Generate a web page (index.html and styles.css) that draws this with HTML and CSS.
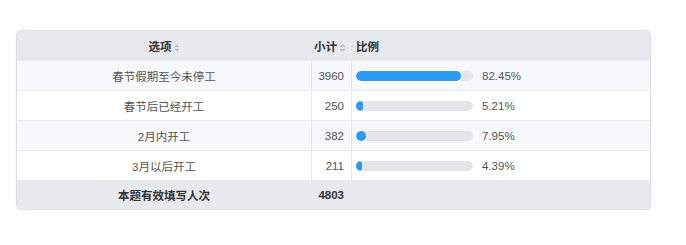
FILE: index.html
```html
<!DOCTYPE html>
<html lang="zh-CN">
<head>
<meta charset="utf-8">
<link rel="stylesheet" href="styles.css">
</head>
<body>
<div class="wrap">
  <table class="stat">
    <colgroup>
      <col class="col-opt">
      <col class="col-num">
      <col class="col-bar">
    </colgroup>
    <thead>
      <tr>
        <th class="c-opt">选项<span class="sort"></span></th>
        <th class="c-num">小计<span class="sort"></span></th>
        <th class="c-bar">比例</th>
      </tr>
    </thead>
    <tbody>
      <tr class="odd">
        <td class="c-opt">春节假期至今未停工</td>
        <td class="c-num">3960</td>
        <td class="c-bar"><div class="barline"><div class="track"><div class="fill" style="width:89.5%"></div></div><span class="pct">82.45%</span></div></td>
      </tr>
      <tr>
        <td class="c-opt">春节后已经开工</td>
        <td class="c-num">250</td>
        <td class="c-bar"><div class="barline"><div class="track"><div class="fill" style="width:6%"></div></div><span class="pct">5.21%</span></div></td>
      </tr>
      <tr class="odd">
        <td class="c-opt">2月内开工</td>
        <td class="c-num">382</td>
        <td class="c-bar"><div class="barline"><div class="track"><div class="fill" style="width:8.5%"></div></div><span class="pct">7.95%</span></div></td>
      </tr>
      <tr>
        <td class="c-opt">3月以后开工</td>
        <td class="c-num">211</td>
        <td class="c-bar"><div class="barline"><div class="track"><div class="fill" style="width:5.2%"></div></div><span class="pct">4.39%</span></div></td>
      </tr>
    </tbody>
    <tfoot>
      <tr>
        <td class="c-opt">本题有效填写人次</td>
        <td class="c-num">4803</td>
        <td class="c-bar"></td>
      </tr>
    </tfoot>
  </table>
</div>
</body>
</html>
```
FILE: styles.css
```css
html, body {
  margin: 0;
  padding: 0;
  background: #ffffff;
}
.wrap {
  padding: 30px 0 0 16px;
}
.stat {
  width: 635px;
  border-collapse: separate;
  border-spacing: 0;
  border: 1px solid #dcdfe4;
  border-radius: 5px;
  overflow: hidden;
  box-shadow: 0 1px 2px rgba(0, 0, 0, 0.08);
  font-family: "Liberation Sans", "Noto Sans CJK SC", sans-serif;
  font-size: 11.5px;
  color: #555555;
  table-layout: fixed;
}
.col-opt { width: 295px; }
.col-num { width: 40px; }
.col-bar { width: auto; }
.stat th, .stat td {
  padding: 0;
  height: 30px;
  box-sizing: border-box;
  vertical-align: middle;
  border-bottom: 1px solid #e9ebee;
}
.stat th {
  background: #e7e9ec;
  color: #333333;
  font-weight: bold;
}
.stat tbody tr {
  background: #ffffff;
}
.stat tbody tr.odd {
  background: #f6f8fa;
}
.stat tfoot td {
  background: #e7e9ec;
  color: #333333;
  font-weight: bold;
  border-bottom: none;
  height: 28px;
}
.c-opt {
  text-align: center;
  border-right: 1px solid #e6e8eb;
}
.stat .c-num {
  text-align: right;
  padding-right: 7px;
  border-right: 1px solid #e6e8eb;
}
.stat th.c-num {
  text-align: left;
  padding-left: 2px;
  padding-right: 0;
}
.stat .c-bar {
  text-align: left;
  padding-left: 4px;
}
.sort {
  display: inline-block;
  width: 5px;
  height: 8px;
  margin-left: 3px;
  vertical-align: -1px;
  background:
    linear-gradient(to bottom right, transparent 50%, #b8bcc2 50%) 0 0 / 2.5px 3px no-repeat,
    linear-gradient(to bottom left, transparent 50%, #b8bcc2 50%) 2.5px 0 / 2.5px 3px no-repeat,
    linear-gradient(to top right, transparent 50%, #b8bcc2 50%) 0 5px / 2.5px 3px no-repeat,
    linear-gradient(to top left, transparent 50%, #b8bcc2 50%) 2.5px 5px / 2.5px 3px no-repeat;
}
.barline {
  display: flex;
  align-items: center;
  gap: 9px;
}
.track {
  width: 117px;
  height: 10px;
  border-radius: 5px;
  background: #e4e6ea;
  overflow: hidden;
}
.fill {
  height: 100%;
  border-radius: 5px;
  background: #2b9af3;
}
.pct {
  color: #555555;
}
```
